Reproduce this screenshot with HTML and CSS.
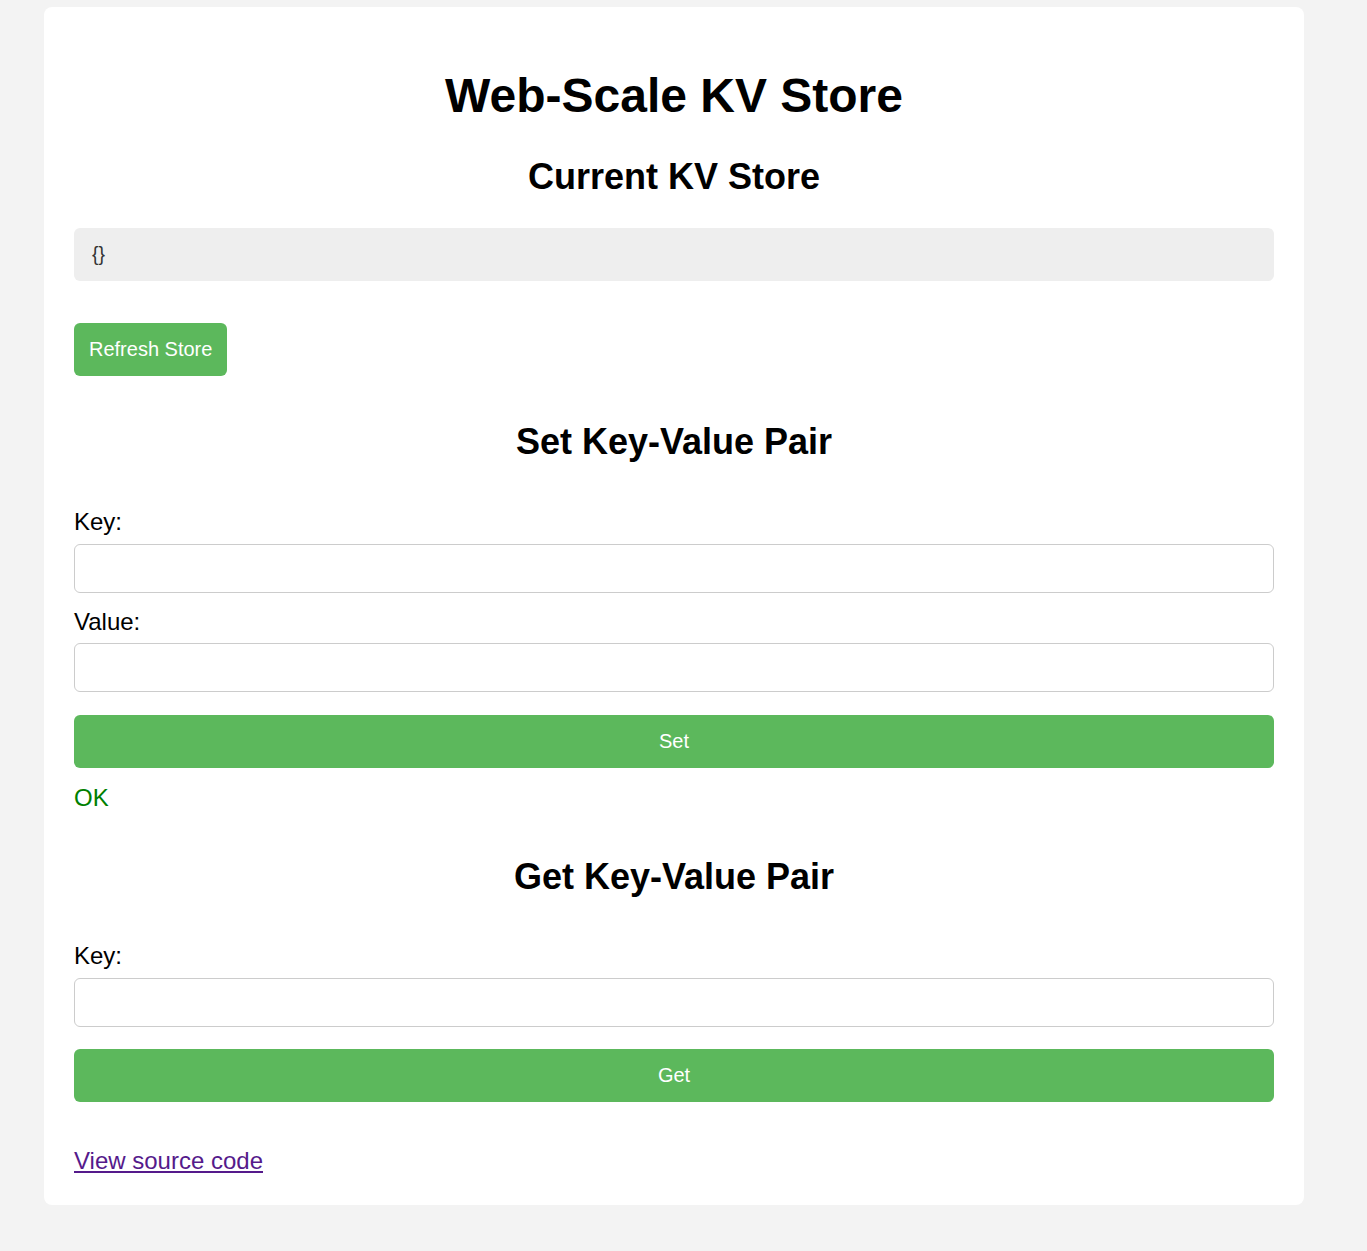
FILE: index.html
```html
<!DOCTYPE html>
<html lang="en">
<head>
<meta charset="utf-8">
<title>Web-Scale KV Store</title>
<link rel="stylesheet" href="styles.css">
</head>
<body>
<div class="container">
  <h1 class="title">Web-Scale KV Store</h1>

  <h2 class="section-title first">Current KV Store</h2>
  <pre class="store">{}</pre>
  <button class="btn btn-inline" type="button">Refresh Store</button>

  <h2 class="section-title">Set Key-Value Pair</h2>
  <form class="form">
    <label class="label" for="set-key">Key:</label>
    <input class="input" id="set-key" type="text">
    <label class="label label-next" for="set-value">Value:</label>
    <input class="input" id="set-value" type="text">
    <button class="btn btn-block" type="button">Set</button>
  </form>
  <div class="status">OK</div>

  <h2 class="section-title section-get">Get Key-Value Pair</h2>
  <form class="form form-get">
    <label class="label" for="get-key">Key:</label>
    <input class="input" id="get-key" type="text">
    <button class="btn btn-block btn-get" type="button">Get</button>
  </form>

  <p class="source"><a class="source-link" href="#">View source code</a></p>
</div>
</body>
</html>
```

FILE: styles.css
```css
html, body {
  margin: 0;
  padding: 0;
}

body {
  background: #f3f3f3;
  font-family: "Liberation Sans", Arial, sans-serif;
  font-size: 24px;
  color: #000;
  padding: 7px 0 46px 44px;
}

.container {
  width: 1260px;
  box-sizing: border-box;
  background: #fff;
  border-radius: 8px;
  padding: 30px;
  display: flow-root;
}

.title {
  font-size: 48px;
  line-height: 55px;
  font-weight: bold;
  text-align: center;
  margin: 31px 0 33px;
}

.section-title {
  font-size: 36px;
  line-height: 41px;
  font-weight: bold;
  text-align: center;
  margin: 45px 0 0;
}

.section-title.first {
  margin-top: 0;
}

.section-title.section-get {
  margin-top: 44px;
}

.store {
  margin: 31px 0 0;
  background: #eee;
  border-radius: 6px;
  padding: 15px 15px 15px 18px;
  font-family: "Liberation Sans", Arial, sans-serif;
  font-size: 19.5px;
  line-height: 23px;
  color: #333;
}

.btn {
  display: block;
  box-sizing: border-box;
  height: 53px;
  border: none;
  border-radius: 6px;
  background: #5cb85c;
  color: #fff;
  font-family: "Liberation Sans", Arial, sans-serif;
  font-size: 20px;
  line-height: 23px;
  padding: 15px;
  cursor: pointer;
}

.btn-inline {
  margin-top: 42px;
}

.btn-block {
  width: 100%;
  margin-top: 23px;
}

.btn-get {
  margin-top: 22px;
}

.form {
  margin: 46px 0 0;
}

.form-get {
  margin-top: 45px;
}

.label {
  display: block;
  font-size: 24px;
  line-height: 28px;
  margin-bottom: 8px;
}

.label-next {
  margin-top: 15px;
  margin-bottom: 7px;
}

.input {
  display: block;
  box-sizing: border-box;
  width: 100%;
  height: 49px;
  margin: 0;
  border: 1.5px solid #ccc;
  border-radius: 6px;
  background: #fff;
  font-family: "Liberation Sans", Arial, sans-serif;
  font-size: 20px;
  padding: 0 12px;
}

.status {
  margin-top: 16px;
  font-size: 24px;
  line-height: 28px;
  color: #008000;
}

.source {
  margin: 45px 0 0;
  font-size: 24px;
  line-height: 28px;
}

.source-link {
  color: #551a8b;
  text-decoration: underline;
}
```
